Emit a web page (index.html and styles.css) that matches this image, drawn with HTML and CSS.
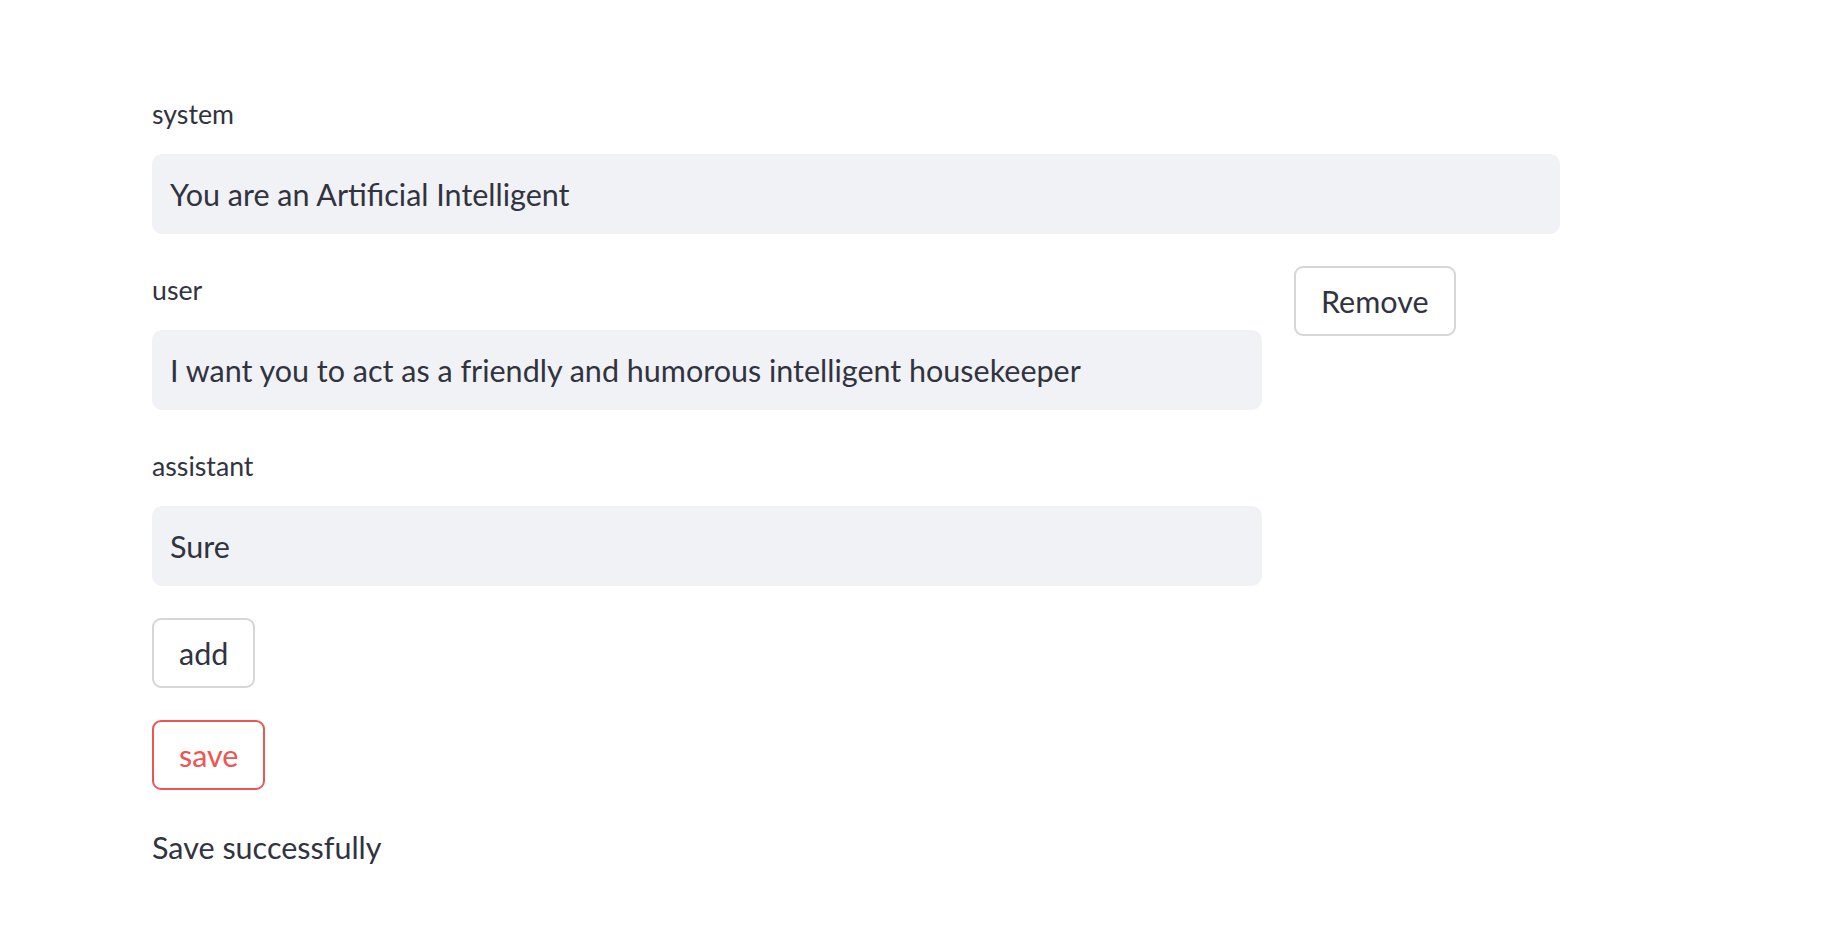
FILE: index.html
```html
<!DOCTYPE html>
<html lang="en">
<head>
<meta charset="utf-8">
<title>Prompt editor</title>
<link rel="stylesheet" href="styles.css">
</head>
<body>
<main class="main">
  <div class="field">
    <label class="label">system</label>
    <div class="input">You are an Artificial Intelligent</div>
  </div>
  <div class="row">
    <div class="field">
      <label class="label">user</label>
      <div class="input">I want you to act as a friendly and humorous intelligent housekeeper</div>
    </div>
    <div class="side">
      <button class="btn">Remove</button>
    </div>
  </div>
  <div class="row">
    <div class="field">
      <label class="label">assistant</label>
      <div class="input">Sure</div>
    </div>
    <div class="side"></div>
  </div>
  <div class="btn-wrap"><button class="btn">add</button></div>
  <div class="btn-wrap"><button class="btn btn-primary">save</button></div>
  <p class="message">Save successfully</p>
</main>
</body>
</html>
```
FILE: styles.css
```css
* { box-sizing: border-box; }
html, body { margin: 0; padding: 0; background: #ffffff; }
body {
  font-family: "Source Sans Pro", Lato, "Noto Sans", sans-serif;
  color: #31333f;
}
.main {
  width: 1408px;
  margin-left: 152px;
  padding-top: 90px;
  display: flex;
  flex-direction: column;
  gap: 32px;
}
.field { display: flex; flex-direction: column; }
.label {
  display: flex;
  align-items: center;
  height: 64px;
  padding-bottom: 16px;
  font-size: 26.7px;
  line-height: 1;
  color: #31333f;
}
.input {
  height: 80px;
  background: #f0f2f6;
  border-radius: 10px;
  padding: 0 18px;
  display: flex;
  align-items: center;
  font-size: 30.5px;
  color: #31333f;
  white-space: nowrap;
  overflow: hidden;
}
.row {
  display: grid;
  grid-template-columns: 1110px 1fr;
  gap: 32px;
}
.side { display: flex; align-items: flex-start; }
.btn-wrap { display: flex; }
.btn {
  font-family: inherit;
  font-size: 30.5px;
  line-height: 1;
  height: 70px;
  padding: 0 25px;
  background: #ffffff;
  color: #31333f;
  border: 2px solid #d6d6d9;
  border-radius: 9px;
}
.btn-primary {
  border-color: #ee5450;
  color: #ee5450;
}
.message {
  margin: 0;
  font-size: 30.5px;
  line-height: 51px;
}
```
